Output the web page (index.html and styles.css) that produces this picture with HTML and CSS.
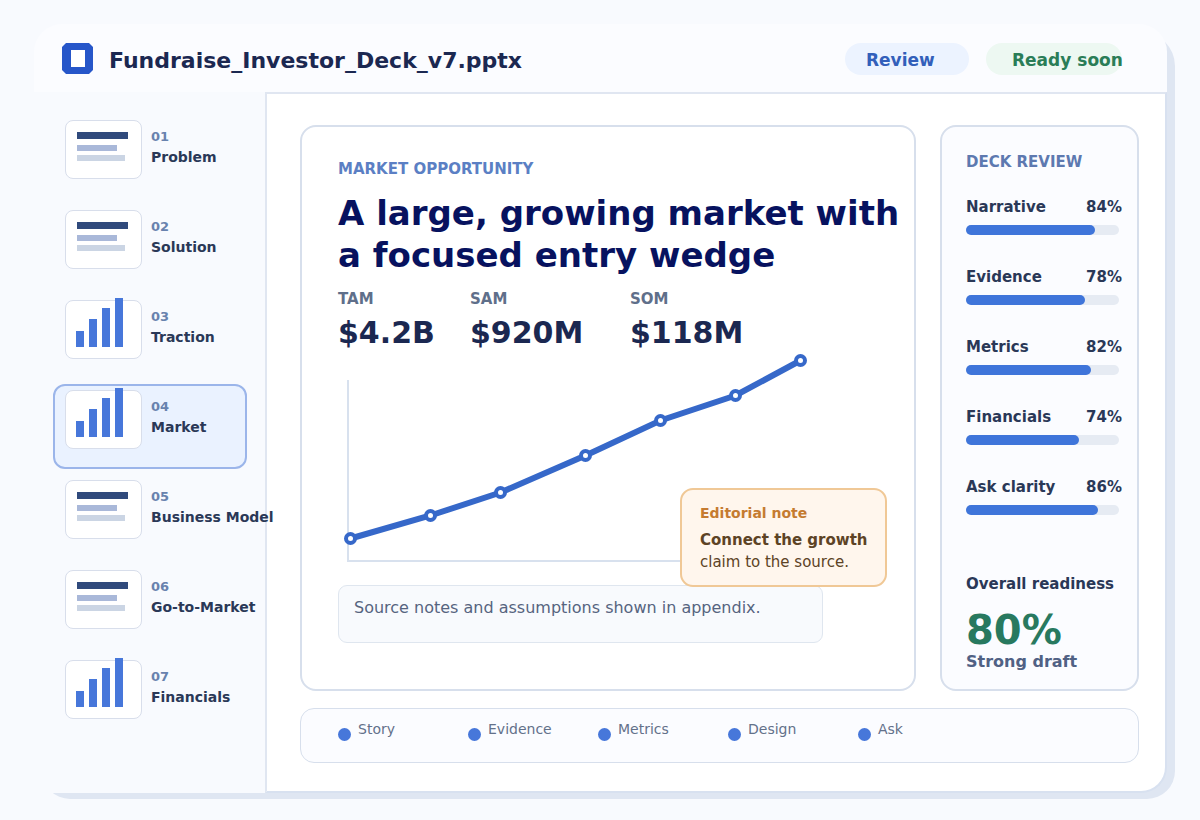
FILE: index.html
```html
<!DOCTYPE html>
<html lang="en">
<head>
<meta charset="utf-8">
<meta name="viewport" content="width=device-width, initial-scale=1">
<title>Fundraise_Investor_Deck_v7.pptx</title>
<link rel="stylesheet" href="styles.css">
</head>
<body>
<svg class="defs" width="0" height="0" aria-hidden="true">
  <symbol id="thumb-text" viewBox="0 0 75 57">
    <rect x="11" y="11" width="51" height="7" fill="#304a7c"/>
    <rect x="11" y="24" width="40" height="6" fill="#a9b8d9"/>
    <rect x="11" y="34" width="48" height="6" fill="#cbd5e4"/>
  </symbol>
  <symbol id="thumb-bars" viewBox="0 0 75 57" overflow="visible">
    <path fill="#4777da" d="M10 30h8v16h-8zM23 18h8v28h-8zM36 7h8v39h-8zM49 -3h8v49h-8z"/>
  </symbol>
</svg>
<div class="window">
  <header class="header">
    <svg class="logo" viewBox="0 0 31 31" aria-hidden="true">
      <path d="M4 0H27L31 4V27L27 31H4L0 27V4Z" fill="#2656c9"/>
      <rect x="9" y="7" width="14" height="17" fill="#fff"/>
    </svg>
    <h1 class="file-name">Fundraise_Investor_Deck_v7.pptx</h1>
    <span class="pill pill-review">Review</span>
    <span class="pill pill-ready">Ready soon</span>
  </header>
  <div class="body">
    <nav class="slides" aria-label="Slides">
      <button class="slide" type="button"><span class="thumb"><svg><use href="#thumb-text"/></svg></span><span class="slide-text"><span class="slide-number">01</span><span class="slide-name">Problem</span></span></button>
      <button class="slide" type="button"><span class="thumb"><svg><use href="#thumb-text"/></svg></span><span class="slide-text"><span class="slide-number">02</span><span class="slide-name">Solution</span></span></button>
      <button class="slide" type="button"><span class="thumb"><svg><use href="#thumb-bars"/></svg></span><span class="slide-text"><span class="slide-number">03</span><span class="slide-name">Traction</span></span></button>
      <button class="slide slide-current" type="button" aria-current="true"><span class="thumb"><svg><use href="#thumb-bars"/></svg></span><span class="slide-text"><span class="slide-number">04</span><span class="slide-name">Market</span></span></button>
      <button class="slide" type="button"><span class="thumb"><svg><use href="#thumb-text"/></svg></span><span class="slide-text"><span class="slide-number">05</span><span class="slide-name">Business Model</span></span></button>
      <button class="slide" type="button"><span class="thumb"><svg><use href="#thumb-text"/></svg></span><span class="slide-text"><span class="slide-number">06</span><span class="slide-name">Go-to-Market</span></span></button>
      <button class="slide" type="button"><span class="thumb"><svg><use href="#thumb-bars"/></svg></span><span class="slide-text"><span class="slide-number">07</span><span class="slide-name">Financials</span></span></button>
    </nav>
    <main class="main">
      <article class="card canvas">
        <p class="eyebrow">MARKET OPPORTUNITY</p>
        <h2 class="headline">A large, growing market with<br>a focused entry wedge</h2>
        <dl class="stats">
          <div><dt>TAM</dt><dd>$4.2B</dd></div>
          <div><dt>SAM</dt><dd>$920M</dd></div>
          <div><dt>SOM</dt><dd>$118M</dd></div>
        </dl>
        <svg class="chart" width="500" height="213" viewBox="0 1 500 213" role="img" aria-label="Market growth line chart">
          <path d="M10 30V211H494" fill="none" stroke="#d8e1ee" stroke-width="2"/>
          <g transform="translate(.5 .5)">
            <path d="M12 188L92 165L162 142L247 105L322 70L397 45L462 10" fill="none" stroke="#3668c9" stroke-width="6"/>
            <g fill="#fff" stroke="#3668c9" stroke-width="4">
              <circle cx="12" cy="188" r="4.5"/><circle cx="92" cy="165" r="4.5"/><circle cx="162" cy="142" r="4.5"/><circle cx="247" cy="105" r="4.5"/><circle cx="322" cy="70" r="4.5"/><circle cx="397" cy="45" r="4.5"/><circle cx="462" cy="10" r="4.5"/>
            </g>
          </g>
        </svg>
        <p class="source">Source notes and assumptions shown in appendix.</p>
        <aside class="note">
          <h3 class="note-title">Editorial note</h3>
          <p class="note-text"><strong>Connect the growth</strong><br>claim to the source.</p>
        </aside>
      </article>
      <section class="card review">
        <h2 class="review-title">DECK REVIEW</h2>
        <div class="metrics">
          <div><div class="metric-row"><span>Narrative</span><span>84%</span></div><div class="track"><div class="fill" style="width:84%"></div></div></div>
          <div><div class="metric-row"><span>Evidence</span><span>78%</span></div><div class="track"><div class="fill" style="width:78%"></div></div></div>
          <div><div class="metric-row"><span>Metrics</span><span>82%</span></div><div class="track"><div class="fill" style="width:82%"></div></div></div>
          <div><div class="metric-row"><span>Financials</span><span>74%</span></div><div class="track"><div class="fill" style="width:74%"></div></div></div>
          <div><div class="metric-row"><span>Ask clarity</span><span>86%</span></div><div class="track"><div class="fill" style="width:86%"></div></div></div>
        </div>
        <div class="overall">
          <p class="overall-label">Overall readiness</p>
          <p class="overall-value">80%</p>
          <p class="overall-note">Strong draft</p>
        </div>
      </section>
      <ul class="checks">
        <li>Story</li>
        <li>Evidence</li>
        <li>Metrics</li>
        <li>Design</li>
        <li>Ask</li>
      </ul>
    </main>
  </div>
</div>
</body>
</html>
```
FILE: styles.css
```css
* { box-sizing: border-box; }

body, h1, h2, h3, p, dl, dd, ul { margin: 0; }

body {
  display: flex;
  min-height: 100vh;
  padding: 24px 33px 27px 34px;
  background: #f8fafe;
  font-family: "DejaVu Sans", sans-serif;
  font-size: 15px;
  line-height: 20px;
  color: #2a3857;
}

.defs { position: absolute; }

.window {
  position: relative;
  isolation: isolate;
  flex: 1;
  display: flex;
  flex-direction: column;
  min-width: 0;
}

/* Hard-edged drop shadow behind the window */
.window::before {
  content: "";
  position: absolute;
  z-index: -1;
  inset: 8px -8px -6px 8px;
  border-radius: 28px 34px 28px 28px;
  background: #dfe6f2;
}

.header {
  display: flex;
  align-items: flex-start;
  height: 68px;
  padding: 19px 45px 0 28px;
  border-radius: 28px 28px 0 0;
  background: #fbfcff;
}

.logo { width: 31px; height: 31px; }

.file-name {
  flex: 1;
  margin-left: 16px;
  font-size: 22px;
  line-height: 36px;
  color: #1b2851;
}

.pill {
  height: 32px;
  border-radius: 16px;
  font-size: 17px;
  font-weight: bold;
  line-height: 34px;
  white-space: nowrap;
}

.pill-review {
  width: 124px;
  padding-left: 21px;
  background: #ecf3ff;
  color: #325fba;
}

.pill-ready {
  width: 136px;
  margin-left: 17px;
  padding-left: 26px;
  background: #edf8f2;
  color: #2a7d57;
}

.body { flex: 1; display: flex; }

.slides {
  position: relative;
  z-index: 1;
  display: flex;
  flex-direction: column;
  gap: 5px;
  width: 231px;
  padding: 22px 18px 0 19px;
  background: #f8fafe;
}

.slide {
  display: flex;
  align-items: flex-start;
  gap: 9px;
  height: 85px;
  padding: 4px 10px;
  border: 2px solid transparent;
  border-radius: 12px;
  background: none;
  font: inherit;
  font-weight: bold;
  text-align: left;
  white-space: nowrap;
  color: #2a3857;
}

.slide-current { border-color: #9bb5ea; background: #eaf2ff; }

.thumb {
  flex: none;
  width: 77px;
  height: 59px;
  border: 1px solid #d8deeb;
  border-radius: 8px;
  background: #fff;
}

.thumb svg { display: block; width: 75px; height: 57px; overflow: visible; }

.slide-text { padding-top: 8px; }

.slide-number { display: block; font-size: 13px; line-height: 18px; color: #6882ae; }

.slide-name { display: block; font-size: 14px; line-height: 22px; }

.main {
  flex: 1;
  display: grid;
  grid-template-columns: 1fr 199px;
  grid-template-rows: 1fr 55px;
  gap: 17px 24px;
  padding: 31px 26px 28px 33px;
  border: 2px solid #e0e6f1;
  border-right-color: #d8e1f0;
  border-bottom-color: #d8e1f0;
  border-bottom-right-radius: 26px;
  background: #fff;
}

.card { border: 2px solid #d7dfec; border-radius: 16px; }

.canvas { position: relative; padding: 32px 12px 46px 36px; }

.eyebrow { font-weight: bold; color: #5b7fc4; }

.headline {
  margin-top: 13px;
  font-size: 34px;
  line-height: 42px;
  color: #07125f;
}

.stats {
  display: grid;
  grid-template-columns: 132px 160px 1fr;
  margin-top: 13px;
  font-weight: bold;
}

.stats dt { color: #5f6f8a; }

.stats dd { margin-top: 6px; font-size: 30px; line-height: 36px; color: #1b2851; }

.chart { display: block; }

.source {
  width: 485px;
  height: 58px;
  margin-top: 21px;
  padding: 10px 15px;
  border: 1px solid #dfe6ef;
  border-radius: 9px;
  background: #f8fafd;
  font-size: 16px;
  line-height: 24px;
  color: #56647f;
}

.note {
  position: absolute;
  right: 27px;
  bottom: 102px;
  width: 207px;
  padding: 13px 0 12px 18px;
  border: 2px solid #f0c896;
  border-radius: 13px;
  background: #fff6ed;
  color: #5d4325;
}

.note-title { font-size: 14px; line-height: 20px; color: #c57b30; }

.note-text { margin-top: 6px; line-height: 22px; white-space: nowrap; }

.review {
  display: flex;
  flex-direction: column;
  padding: 25px 15px 17px 24px;
  background: #fbfcff;
}

.review-title { font-size: 15px; line-height: 20px; color: #5d79b0; }

.metrics { display: grid; gap: 32px; margin-top: 25px; }

.metric-row { display: flex; justify-content: space-between; font-weight: bold; }

.track {
  height: 10px;
  margin: 8px 3px 0 0;
  border-radius: 5px;
  background: #e6ebf3;
}

.fill { height: 10px; border-radius: 5px; background: #3f75da; }

.overall { margin-top: auto; font-weight: bold; white-space: nowrap; }

.overall-value { margin-top: 14px; font-size: 40px; line-height: 44px; color: #28795f; }

.overall-note { font-size: 16px; color: #506184; }

.checks {
  grid-column: 1 / -1;
  display: flex;
  padding: 10px 37px;
  border: 1px solid #d7dfec;
  border-radius: 14px;
  background: #fbfcff;
  list-style: none;
  font-size: 14px;
  color: #63718a;
}

.checks li { display: flex; gap: 7px; width: 130px; }

.checks li::before {
  content: "";
  width: 13px;
  height: 13px;
  margin-top: 9px;
  border-radius: 50%;
  background: #4777da;
}
```
